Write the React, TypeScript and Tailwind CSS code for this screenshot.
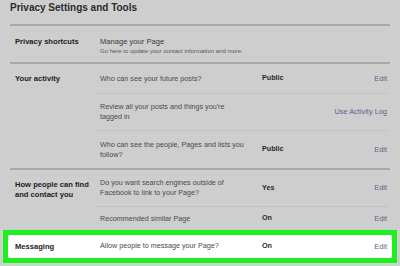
import React from 'react';

const font = { fontFamily: '"Liberation Sans", Arial, sans-serif' };

// one line of a settings section
const Row: React.FC<{ desc: React.ReactNode; value?: string; action: string; className?: string; line?: boolean }> = ({ desc, value, action, className = '', line }) => (
    <div className={`flex items-center ${line ? 'border-t border-[#c2c2c2]' : ''} ${className}`}>
        <div className="w-[162px] text-[7.2px] leading-[10px] text-[#4a4a4a]">{desc}</div>
        <div className="flex-1 text-[7.2px] font-bold text-[#2a2a2a]">{value}</div>
        <div className="text-[7.4px] text-[#56658c]">{action}</div>
    </div>
);

export default function App() {
    return (
        <div className="w-[400px] h-[266px] overflow-hidden bg-[#cecece] text-[#222]" style={font}>
            <div className="px-[10px] h-[24px] flex items-center">
                <h1 className="text-[10px] font-bold text-[#2b2b2b] -mt-[9px]">Privacy Settings and Tools</h1>
            </div>

            {/* Privacy shortcuts */}
            <div className="mx-[10px] border-t-2 border-[#a9a9a9] h-[38px] flex pl-[5px] pr-[5px] pt-[10px]">
                <div className="w-[85px] text-[7.6px] font-bold text-[#222]">Privacy shortcuts</div>
                <div>
                    <div className="text-[7.6px] text-[#3a3a3a] leading-[11px]">Manage your Page</div>
                    <div className="text-[6px] text-[#555] leading-[9px]">Go here to update your contact information and more.</div>
                </div>
            </div>

            {/* Your activity */}
            <div className="mx-[10px] border-t-2 border-[#a9a9a9] flex pl-[5px] pr-[3px]">
                <div className="w-[80px] pt-[9px] text-[7.6px] font-bold text-[#222]">Your activity</div>
                <div className="flex-1">
                    <Row className="h-[29px] pl-[5px]" desc="Who can see your future posts?" value="Public" action="Edit" />
                    <Row line className="h-[37px] pl-[5px]" desc={<>Review all your posts and things you're<br />tagged in</>} action="Use Activity Log" />
                    <Row line className="h-[38px] pl-[5px]" desc={<>Who can see the people, Pages and lists you<br />follow?</>} value="Public" action="Edit" />
                </div>
            </div>

            {/* How people can find */}
            <div className="mx-[10px] border-t-2 border-[#a9a9a9] flex pl-[5px] pr-[3px]">
                <div className="w-[80px] pt-[10px] text-[7.6px] leading-[10px] font-bold text-[#222]">How people can find<br />and contact you</div>
                <div className="flex-1">
                    <Row className="h-[36px] pl-[5px]" desc={<>Do you want search engines outside of<br />Facebook to link to your Page?</>} value="Yes" action="Edit" />
                    <Row line className="h-[24px] pl-[5px]" desc="Recommended similar Page" value="On" action="Edit" />
                </div>
            </div>

            {/* Messaging, highlighted */}
            <div className="mx-[3px] border-[5px] border-[#1ef01e] bg-white h-[33px] flex items-center pl-[7px] pr-[5px]">
                <div className="w-[85px] text-[7.6px] font-bold text-[#222]">Messaging</div>
                <div className="flex-1">
                    <Row desc="Allow people to message your Page?" value="On" action="Edit" />
                </div>
            </div>
            <div className="h-[3px] bg-[#c6d8c6]" />
        </div>
    );
}
